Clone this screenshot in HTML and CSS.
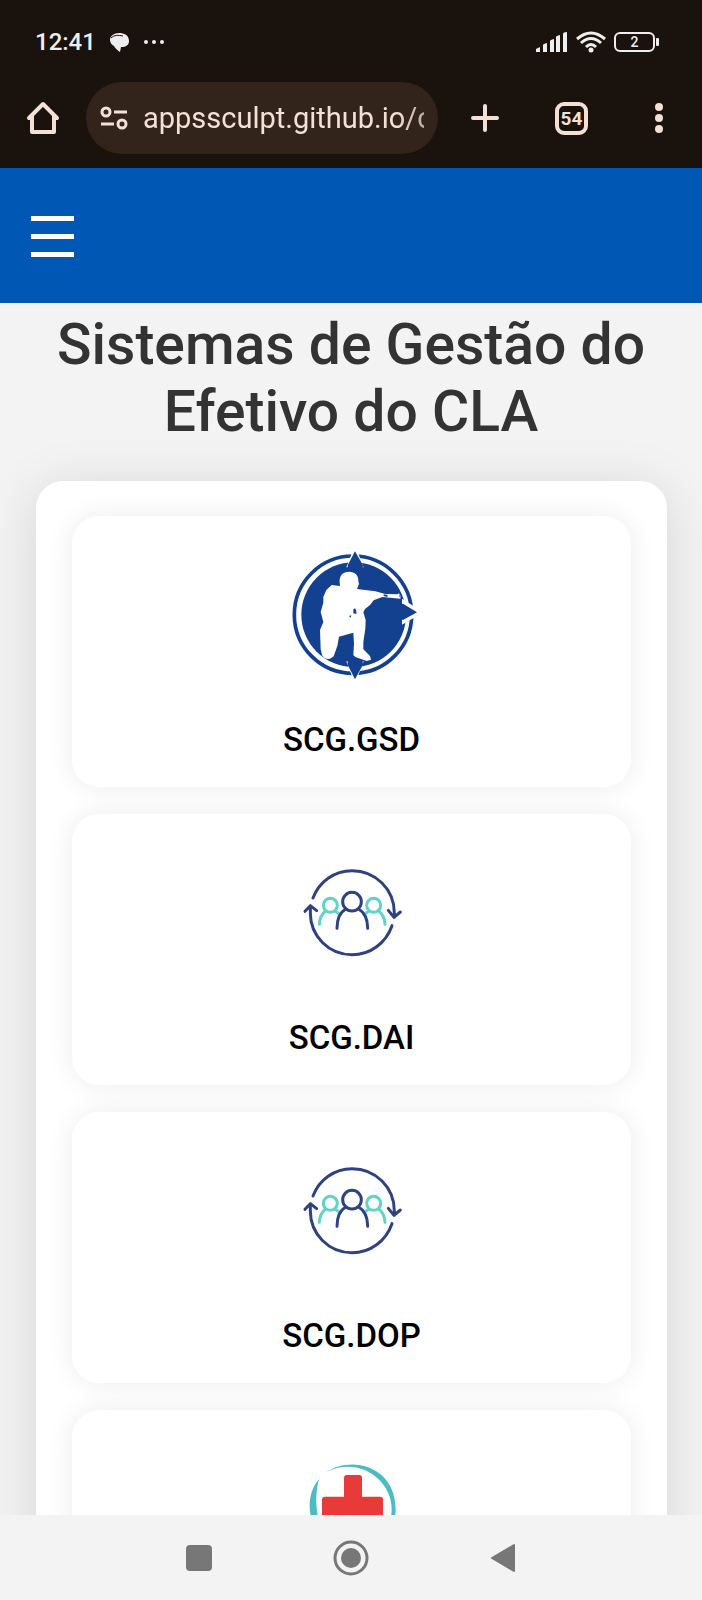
FILE: index.html
```html
<!DOCTYPE html>
<html lang="pt-BR">
<head>
<meta charset="utf-8">
<meta name="viewport" content="width=device-width, initial-scale=1">
<title>Sistemas de Gestão do Efetivo do CLA</title>
<link rel="stylesheet" href="styles.css">
</head>
<body>
<svg class="sprite" aria-hidden="true">
  <symbol id="people" viewBox="-3 -27 432 432">
    <g fill="none" stroke-width="9" stroke-linecap="round" stroke-linejoin="round">
      <g stroke="#62d3c4">
        <circle cx="148" cy="166" r="21"/>
        <circle cx="278" cy="166" r="21"/>
        <path d="M115 223C116 202 123 191 134 183M162 183L174 191M312 223C311 202 304 191 293 183M264 183L252 191"/>
      </g>
      <g stroke="#2e4182">
        <circle cx="213" cy="155" r="28"/>
        <path d="M168 235C168 205 177 187 194 177M260 235C260 205 250 187 233 177"/>
        <path d="M96 144C114 95 160 62 213 62C284 62 340 118 340 189V202M322 181L339 202L358 186"/>
        <path d="M333 227C315 279 268 314 213 314C143 314 88 258 88 189V168M72 184L88 167L107 182"/>
      </g>
    </g>
  </symbol>
</svg>

<div class="status">
  <div class="status-side">
    <span class="clock">12:41</span>
    <svg class="chat" viewBox="0 0 19 19"><path d="M9 0C14 0 19 2 19 8C19 12 16 14 11 14L10 19C7 17 5 15 4 13C2 12 0 10 0 7C0 3 4 0 9 0Z" fill="#eee"/><path d="M1 5C4 2 8 2 13 3" fill="none" stroke="#1a120d" stroke-width="1"/></svg>
    <svg class="dots" viewBox="0 0 22 6" fill="#eee"><circle cx="3" cy="3" r="2"/><circle cx="11" cy="3" r="2"/><circle cx="19" cy="3" r="2"/></svg>
  </div>
  <div class="status-side right">
    <svg class="signal" viewBox="0 0 32 20" fill="#eee"><path d="M0 20V17L4 15V20ZM7 20V13Q7 12 11 11V20ZM14 20V9Q14 8 18 7V20ZM20 20V5Q20 4 24 3V20ZM27 20V2Q27 0 31 0V20Z"/></svg>
    <svg class="wifi" viewBox="0 0 30 22" fill="none" stroke="#eee" stroke-width="3"><path d="M1 8Q15 -4 29 8M5 12Q15 3 25 12M10 16Q15 11 20 16"/><circle cx="15" cy="19" r="2.500" fill="#eee" stroke="none"/></svg>
    <span class="battery">2</span>
  </div>
</div>

<div class="browser">
  <button class="tool home" aria-label="Início"><svg width="34" height="34" viewBox="0 0 34 34" fill="none" stroke="#f3e0d7" stroke-width="4" stroke-linejoin="round" stroke-linecap="round"><path d="M3 17L17 3L31 17M6 15V31H28V15"/></svg></button>
  <div class="address">
    <svg width="28" height="24" viewBox="0 0 28 24" fill="none" stroke="#f3e0d7" stroke-width="3"><circle cx="6" cy="6" r="4"/><path d="M14 6H27M1 18H14"/><circle cx="22" cy="18" r="4"/></svg>
    <input type="text" aria-label="Endereço" value="appssculpt.github.io/c">
  </div>
  <button class="tool" aria-label="Nova guia"><svg width="30" height="30" viewBox="0 0 30 30" stroke="#f3e0d7" stroke-width="4" stroke-linecap="round"><path d="M3 15H27M15 3V27"/></svg></button>
  <button class="tool tabs" aria-label="54 guias"><span>54</span></button>
  <button class="tool" aria-label="Mais opções"><svg width="8" height="30" viewBox="0 0 8 30" fill="#f3e0d7"><circle cx="4" cy="4" r="4"/><circle cx="4" cy="15" r="4"/><circle cx="4" cy="26" r="4"/></svg></button>
</div>

<div class="page">
  <header class="topbar">
    <button class="menu" aria-label="Menu"><span></span><span></span><span></span></button>
  </header>
  <main>
    <h1>Sistemas de Gestão do Efetivo do CLA</h1>
    <div class="panel">
      <a class="card" href="#gsd">
        <svg class="logo" viewBox="27 39 432 432">
          <circle cx="246" cy="254" r="176" fill="none" stroke="#13408f" stroke-width="11"/>
          <circle cx="248" cy="254" r="157" fill="#13408f"/>
          <path d="M226 112L252 46L278 112ZM226 394L252 462L278 394ZM393 206L457 247L393 284Z" fill="#fff"/>
          <path d="M252 64L276 106L274 124H230V106ZM252 448L276 404L274 385H230V404ZM438 247L396 270L375 260V225L396 221Z" fill="#13408f"/>
          <path d="M206 157C204 137 216 125 234 125C252 125 263 136 262 153L264 162L258 177L313 184L343 192L380 193L384 190L389 197L388 206L334 201L308 211L297 225L282 237L277 247L284 270L283 296L277 336V358L297 378L300 389L287 393L253 381L247 375L249 340L247 308L204 320L199 348L188 379C177 390 164 389 154 377L149 358L147 300L157 276L149 246L157 218V201L166 180L182 165L207 168Z" fill="#fff"/>
          <path d="M247 238L252 235L256 243V252L247 250ZM234 258L241 256L239 263ZM338 193L350 195L349 201L338 198ZM386 192L389 199L385 202Z" fill="#13408f"/>
        </svg>
        <span>SCG.GSD</span>
      </a>
      <a class="card" href="#dai"><svg class="logo"><use href="#people"/></svg><span>SCG.DAI</span></a>
      <a class="card" href="#dop"><svg class="logo"><use href="#people"/></svg><span>SCG.DOP</span></a>
      <a class="card" href="#saude" aria-label="Saúde">
        <svg class="logo" viewBox="-33 -6 432 432">
          <path d="M105 100C180 48 314 80 314 211C314 280 250 338 184 328C250 325 302 275 302 210C302 120 200 50 105 100Z" fill="#4bbcc2"/>
          <path d="M84 121C38 170 48 280 119 313C80 270 65 190 84 121Z" fill="#4bbcc2"/>
          <path d="M167 108H205Q213 108 213 117V173H267Q276 173 276 182V228Q276 237 267 237H213V292Q213 300 205 300H167Q159 300 159 292V237H102Q93 237 93 228V182Q93 173 102 173H159V117Q159 108 167 108Z" fill="#e93a3a"/>
        </svg>
      </a>
    </div>
  </main>
</div>

<nav class="system" aria-label="Navegação do sistema">
  <button class="tool" aria-label="Recentes"><svg width="26" height="26"><rect width="26" height="26" rx="4" fill="#777"/></svg></button>
  <button class="tool" aria-label="Tela inicial"><svg width="36" height="36"><circle cx="18" cy="18" r="16" fill="none" stroke="#777" stroke-width="3"/><circle cx="18" cy="18" r="10" fill="#777"/></svg></button>
  <button class="tool" aria-label="Voltar"><svg width="26" height="30" viewBox="0 0 26 30"><path d="M2 15L24 2V28Z" fill="#777" stroke="#777" stroke-width="2" stroke-linejoin="round"/></svg></button>
</nav>
</body>
</html>
```
FILE: styles.css
```css
* { box-sizing: border-box; }

body {
  margin: 0;
  height: 100vh;
  display: flex;
  flex-direction: column;
  background: #f3f3f3;
  font-family: Roboto, sans-serif;
}

button {
  border: 0;
  padding: 0;
  background: none;
  font: inherit;
  color: inherit;
}

svg { display: block; flex-shrink: 0; }

.sprite { position: absolute; width: 0; height: 0; }

.status,
.browser { background: #1a120d; flex-shrink: 0; }

.status {
  display: flex;
  justify-content: space-between;
  align-items: center;
  height: 82px;
  padding: 2px 47px 0 35px;
  color: #eee;
}

.status-side { display: flex; align-items: center; gap: 14px; }
.status-side.right { gap: 8px; }
.clock { font-size: 24px; font-weight: 500; line-height: 30px; }
.chat { width: 19px; height: 19px; }
.dots { width: 22px; height: 6px; }
.signal { width: 32px; height: 20px; }
.wifi { width: 30px; height: 22px; }

.battery {
  position: relative;
  width: 41px;
  height: 20px;
  border: 2px solid #eee;
  border-radius: 6px;
  font-size: 14px;
  font-weight: 500;
  line-height: 16px;
  text-align: center;
}

.battery::after {
  content: "";
  position: absolute;
  right: -6px;
  top: 4px;
  width: 3px;
  height: 8px;
  border-radius: 1px;
  background: #eee;
}

.browser {
  display: flex;
  align-items: center;
  height: 86px;
  padding-bottom: 14px;
  color: #f3e0d7;
}

.tool {
  display: flex;
  align-items: center;
  justify-content: center;
  width: 87px;
  height: 72px;
  flex-shrink: 0;
}

.tool.home { width: 86px; }

.address {
  display: flex;
  align-items: center;
  gap: 15px;
  flex: 1;
  min-width: 0;
  height: 72px;
  margin-right: 3px;
  padding: 0 14px;
  border-radius: 36px;
  background: #33241b;
}

.address input {
  flex: 1;
  min-width: 0;
  height: 44px;
  border: 0;
  padding: 0;
  background: none;
  color: #f3e0d7;
  font-family: Roboto, sans-serif;
  font-size: 29px;
  -webkit-mask-image: linear-gradient(to right, #000 90%, rgba(0, 0, 0, .7));
  mask-image: linear-gradient(to right, #000 90%, rgba(0, 0, 0, .7));
}

.tabs span {
  width: 33px;
  height: 33px;
  border: 4px solid #f3e0d7;
  border-radius: 9px;
  font-size: 19px;
  font-weight: 700;
  line-height: 25px;
  text-align: center;
}

.page {
  flex: 1;
  min-height: 0;
  overflow-y: auto;
  scrollbar-width: none;
}

.topbar {
  display: flex;
  align-items: center;
  height: 135px;
  padding: 2px 31px 0;
  background: #0057b4;
}

.menu { display: grid; gap: 13px; }
.menu span { width: 43px; height: 5px; background: #fff; }

h1 {
  margin: 0;
  padding: 8px 36px 36px;
  color: #333;
  font-size: 57px;
  font-weight: 500;
  line-height: 67px;
  text-align: center;
}

.panel {
  display: grid;
  gap: 27px;
  margin: 0 35px 36px 36px;
  padding: 35px 36px;
  border-radius: 27px;
  background: #fff;
  box-shadow: 0 7px 54px rgba(0, 0, 0, .12);
}

.card {
  display: flex;
  flex-direction: column;
  align-items: center;
  gap: 33px;
  min-height: 271px;
  padding: 27px;
  border-radius: 27px;
  background: #fff;
  box-shadow: 0 0 27px rgba(0, 0, 0, .08);
  color: #000;
  font-size: 33px;
  font-weight: 500;
  line-height: 40px;
  text-decoration: none;
}

.logo { width: 144px; height: 144px; }

.system {
  display: flex;
  justify-content: center;
  align-items: center;
  gap: 65px;
  height: 85px;
  flex-shrink: 0;
  background: #f3f3f3;
  color: #777;
}
```
